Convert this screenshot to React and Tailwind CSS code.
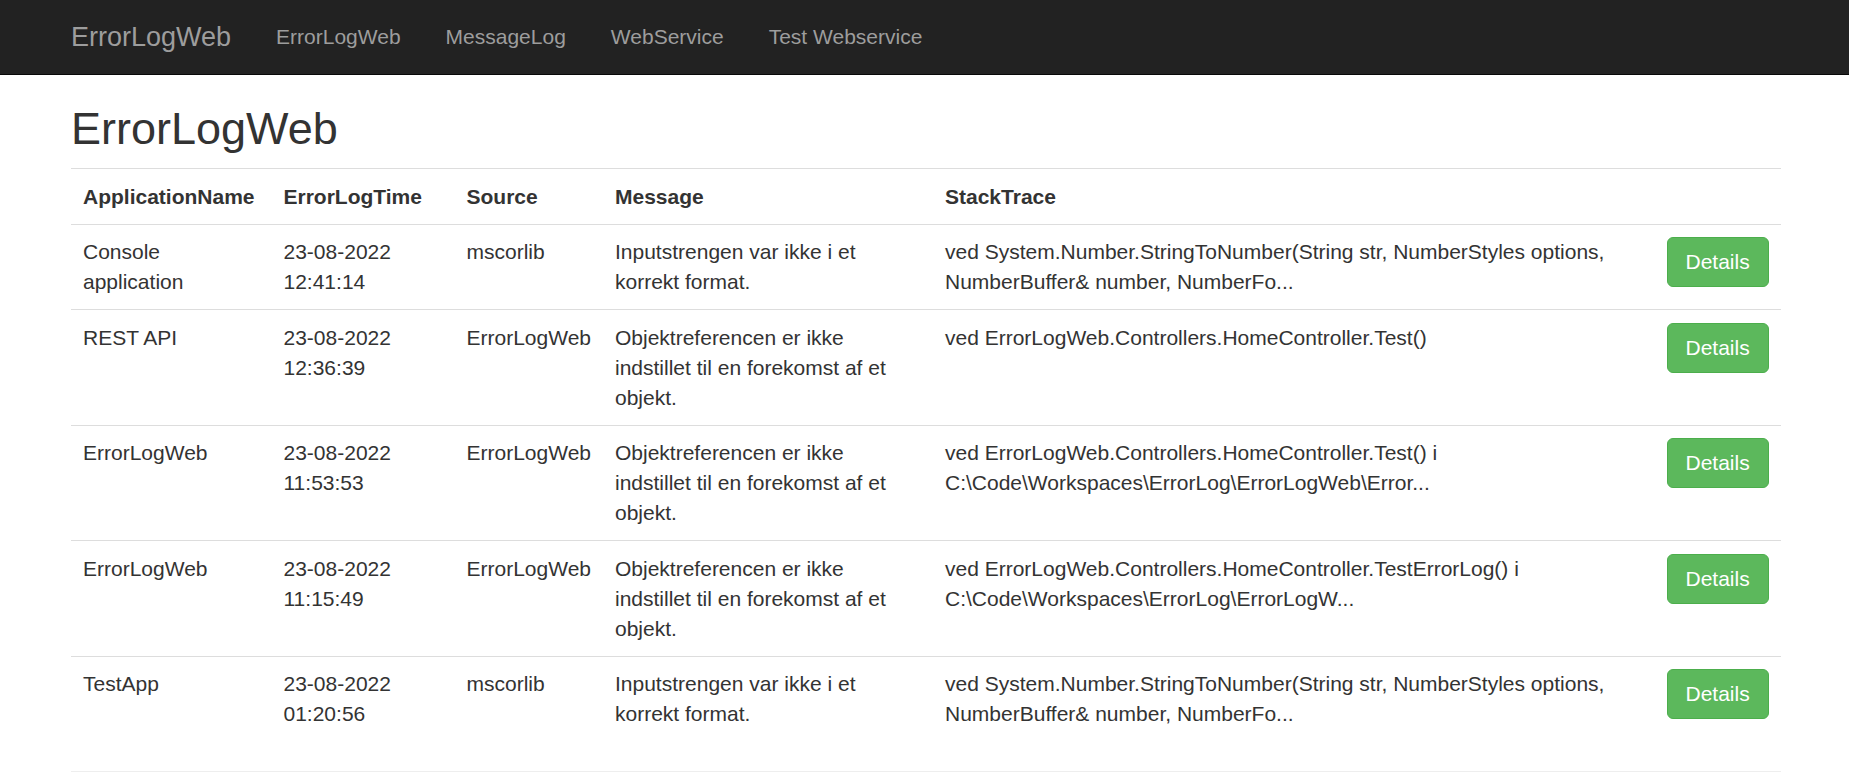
const navLinks = ['ErrorLogWeb', 'MessageLog', 'WebService', 'Test Webservice'];

const logs = [
  {
    app: 'Console application',
    time: '23-08-2022 12:41:14',
    source: 'mscorlib',
    message: 'Inputstrengen var ikke i et korrekt format.',
    trace: 'ved System.Number.StringToNumber(String str, NumberStyles options, NumberBuffer& number, NumberFo...'
  },
  {
    app: 'REST API',
    time: '23-08-2022 12:36:39',
    source: 'ErrorLogWeb',
    message: 'Objektreferencen er ikke indstillet til en forekomst af et objekt.',
    trace: 'ved ErrorLogWeb.Controllers.HomeController.Test()'
  },
  {
    app: 'ErrorLogWeb',
    time: '23-08-2022 11:53:53',
    source: 'ErrorLogWeb',
    message: 'Objektreferencen er ikke indstillet til en forekomst af et objekt.',
    trace: 'ved ErrorLogWeb.Controllers.HomeController.Test() i C:\\Code\\Workspaces\\ErrorLog\\ErrorLogWeb\\Error...'
  },
  {
    app: 'ErrorLogWeb',
    time: '23-08-2022 11:15:49',
    source: 'ErrorLogWeb',
    message: 'Objektreferencen er ikke indstillet til en forekomst af et objekt.',
    trace: 'ved ErrorLogWeb.Controllers.HomeController.TestErrorLog() i C:\\Code\\Workspaces\\ErrorLog\\ErrorLogW...'
  },
  {
    app: 'TestApp',
    time: '23-08-2022 01:20:56',
    source: 'mscorlib',
    message: 'Inputstrengen var ikke i et korrekt format.',
    trace: 'ved System.Number.StringToNumber(String str, NumberStyles options, NumberBuffer& number, NumberFo...'
  }
];

const headers = ['ApplicationName', 'ErrorLogTime', 'Source', 'Message', 'StackTrace', ''];

const cell = 'align-top px-[12px] pt-[12.5px] pb-[12px] border-t border-[#ddd]';

export default function App() {
  return (
    <div className="min-h-screen bg-white text-[#333] text-[21px] leading-[30px]" style={{ fontFamily: '"Liberation Sans", Arial, sans-serif' }}>
      {/* navbar */}
      <div className="h-[75px] bg-[#222] border-b border-[#080808]">
        <div className="w-[1755px] mx-auto pl-[24px] pr-[21px] flex items-center h-full">
          <a className="text-[27px] leading-[30px] text-[#9d9d9d] pr-[22.5px] py-[22.5px]">ErrorLogWeb</a>
          <ul className="flex">
            {navLinks.map(l => (
              <li key={l}><a className="block px-[22.5px] py-[22.5px] text-[#9d9d9d]">{l}</a></li>
            ))}
          </ul>
        </div>
      </div>

      <div className="w-[1755px] mx-auto pl-[24px] pr-[21px]">
        <h2 className="text-[45px] leading-[49.5px] font-medium mt-[28.5px] mb-[15px]">ErrorLogWeb</h2>
        <table className="w-full table-fixed border-collapse mb-[30px]">
          <colgroup>
            <col className="w-[200.5px]" />
            <col className="w-[183px]" />
            <col className="w-[148.5px]" />
            <col className="w-[330px]" />
            <col className="w-[721.5px]" />
            <col />
          </colgroup>
          <tbody>
            <tr>
              {headers.map((h, i) => (
                <th key={i} className={`text-left font-bold ${cell}`}>{h}</th>
              ))}
            </tr>
            {logs.map((r, i) => (
              <tr key={i}>
                <td className={cell}>{r.app}</td>
                <td className={cell}>{r.time}</td>
                <td className={cell}>{r.source}</td>
                <td className={cell}>{r.message}</td>
                <td className={cell}>{r.trace}</td>
                <td className={cell}>
                  <button className="bg-[#5cb85c] border border-[#4cae4c] text-white rounded-[6px] px-[18px] py-[9px] leading-[30px] text-[21px]">Details</button>
                </td>
              </tr>
            ))}
          </tbody>
        </table>
        <hr className="border-0 border-t border-[#eee] mt-[30px] mb-[30px]" />
      </div>
    </div>
  );
}
